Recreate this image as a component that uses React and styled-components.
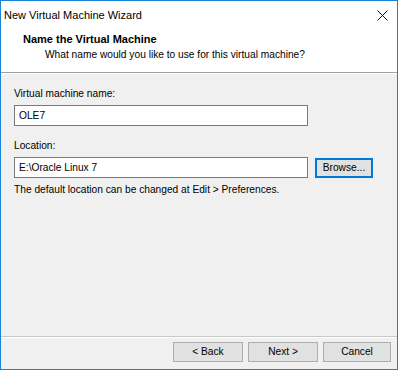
import React from "react";
import styled, { createGlobalStyle } from "styled-components";

const Global = createGlobalStyle`
  html, body { margin: 0; padding: 0; background: #ffffff; }
  body { font-family: "Liberation Sans", Arial, sans-serif; font-size: 10.2px; color: #000; }
  * { box-sizing: border-box; }
`;

const Window = styled.div`
  width: 398px;
  height: 370px;
  border: 1px solid #1883d7;
  background: #f0f0f0;
  display: flex;
  flex-direction: column;
`;

const TitleBar = styled.div`
  height: 28px;
  background: #ffffff;
  display: flex;
  align-items: center;
  justify-content: space-between;
  padding: 0 0 0 3px;
`;

const TitleText = styled.div`
  font-size: 11px;
  line-height: 16px;
`;

const CloseButton = styled.div`
  width: 28px;
  height: 28px;
  margin-right: 1px;
  display: flex;
  align-items: center;
  justify-content: center;
`;

const Header = styled.div`
  background: #ffffff;
  height: 44px;
  padding: 2px 0 0 22px;
  border-bottom: 1px solid #a0a0a0;
  box-shadow: 0 1px 0 #ffffff;
`;

const HeaderTitle = styled.div`
  font-weight: 700;
  font-size: 11px;
  line-height: 16px;
`;

const HeaderSub = styled.div`
  padding-left: 22px;
  line-height: 16px;
`;

const Body = styled.div`
  flex: 1;
  padding: 13px 0 0 13px;
  display: flex;
  flex-direction: column;
`;

const Label = styled.div`
  line-height: 16px;
  margin-top: ${(p) => p.$top || 0}px;
`;

const Row = styled.div`
  display: flex;
  align-items: center;
  gap: 7px;
  margin-top: 3px;
`;

const TextBox = styled.div`
  width: 294px;
  height: 21px;
  background: #ffffff;
  border: 1px solid #7a7a7a;
  padding-left: 4px;
  display: flex;
  align-items: center;
  line-height: 16px;
`;

const Note = styled.div`
  line-height: 16px;
  margin-top: 4px;
`;

const Footer = styled.div`
  height: 33px;
  border-top: 1px solid #c8c8c8;
  box-shadow: inset 0 1px 0 #ffffff;
  display: flex;
  justify-content: flex-end;
  align-items: center;
  gap: 5px;
  padding: 0 6px 2px 0;
`;

const Button = styled.div`
  width: ${(p) => p.$w || 70}px;
  height: 20px;
  background: #e1e1e1;
  border: 1px solid ${(p) => (p.$focus ? "#0078d7" : "#adadad")};
  box-shadow: ${(p) => (p.$focus ? "inset 0 0 0 1px #0078d7" : "none")};
  display: flex;
  align-items: center;
  justify-content: center;
  line-height: 16px;
`;

export default function App() {
  return (
    <>
      <Global />
      <Window>
        <TitleBar>
          <TitleText>New Virtual Machine Wizard</TitleText>
          <CloseButton>
            <svg width="11" height="11" viewBox="0 0 11 11">
              <path d="M0.5 0.5 L10.5 10.5 M10.5 0.5 L0.5 10.5" stroke="#111" strokeWidth="1" fill="none" />
            </svg>
          </CloseButton>
        </TitleBar>
        <Header>
          <HeaderTitle>Name the Virtual Machine</HeaderTitle>
          <HeaderSub>What name would you like to use for this virtual machine?</HeaderSub>
        </Header>
        <Body>
          <Label>Virtual machine name:</Label>
          <Row>
            <TextBox>OLE7</TextBox>
          </Row>
          <Label $top={12}>Location:</Label>
          <Row>
            <TextBox>E:\Oracle Linux 7</TextBox>
            <Button $w={58} $focus>Browse...</Button>
          </Row>
          <Note>The default location can be changed at Edit &gt; Preferences.</Note>
        </Body>
        <Footer>
          <Button>&lt; Back</Button>
          <Button>Next &gt;</Button>
          <Button $w={68}>Cancel</Button>
        </Footer>
      </Window>
    </>
  );
}
